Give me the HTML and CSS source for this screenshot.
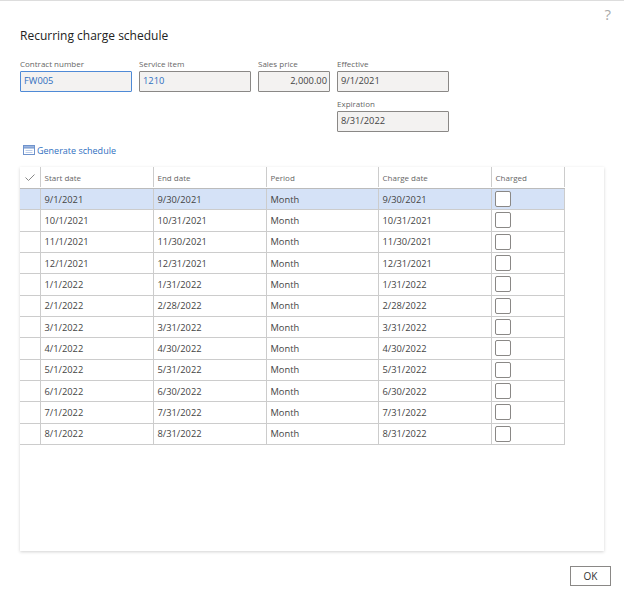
FILE: index.html
```html
<!DOCTYPE html>
<html lang="en">
<head>
    <meta charset="UTF-8">
    <title>Recurring charge schedule</title>
    <link rel="stylesheet" href="styles.css">
</head>
<body>
    <div class="dialog">
        <div class="help">?</div>
        <h1 class="title">Recurring charge schedule</h1>

        <!-- Header fields -->
        <div class="fields">
            <div class="field w-wide">
                <label>Contract number</label>
                <div class="input focused link">FW005</div>
            </div>
            <div class="field w-wide">
                <label>Service item</label>
                <div class="input link">1210</div>
            </div>
            <div class="field w-price">
                <label>Sales price</label>
                <div class="input right">2,000.00</div>
            </div>
            <div class="field-stack">
                <div class="field w-wide">
                    <label>Effective</label>
                    <div class="input">9/1/2021</div>
                </div>
                <div class="field w-wide">
                    <label>Expiration</label>
                    <div class="input">8/31/2022</div>
                </div>
            </div>
        </div>

        <div class="toolbar">
            <svg class="calendar" width="12" height="10" viewBox="0 0 12 10">
                <rect x="0.5" y="0.5" width="11" height="9" fill="none" stroke="#6f93cc"/>
                <rect x="0.5" y="0.5" width="11" height="2.5" fill="#9db6df" stroke="#6f93cc"/>
                <path d="M2.5 5.5h7M2.5 7.5h7" stroke="#bccde9"/>
            </svg>
            <span>Generate schedule</span>
        </div>

        <!-- Schedule grid -->
        <div class="panel">
            <div class="grid-row grid-head">
                <div class="cell check-cell">
                    <svg width="10" height="7" viewBox="0 0 10 7"><path d="M0.5 3.5l3 3 6-6" fill="none" stroke="#888"/></svg>
                </div>
                <div class="cell">Start date</div>
                <div class="cell">End date</div>
                <div class="cell">Period</div>
                <div class="cell">Charge date</div>
                <div class="cell">Charged</div>
            </div>
            <div class="grid-row selected">
                <div class="cell check-cell"></div>
                <div class="cell">9/1/2021</div><div class="cell">9/30/2021</div><div class="cell">Month</div><div class="cell">9/30/2021</div>
                <div class="cell"><span class="box"></span></div>
            </div>
            <div class="grid-row">
                <div class="cell check-cell"></div>
                <div class="cell">10/1/2021</div><div class="cell">10/31/2021</div><div class="cell">Month</div><div class="cell">10/31/2021</div>
                <div class="cell"><span class="box"></span></div>
            </div>
            <div class="grid-row">
                <div class="cell check-cell"></div>
                <div class="cell">11/1/2021</div><div class="cell">11/30/2021</div><div class="cell">Month</div><div class="cell">11/30/2021</div>
                <div class="cell"><span class="box"></span></div>
            </div>
            <div class="grid-row">
                <div class="cell check-cell"></div>
                <div class="cell">12/1/2021</div><div class="cell">12/31/2021</div><div class="cell">Month</div><div class="cell">12/31/2021</div>
                <div class="cell"><span class="box"></span></div>
            </div>
            <div class="grid-row">
                <div class="cell check-cell"></div>
                <div class="cell">1/1/2022</div><div class="cell">1/31/2022</div><div class="cell">Month</div><div class="cell">1/31/2022</div>
                <div class="cell"><span class="box"></span></div>
            </div>
            <div class="grid-row">
                <div class="cell check-cell"></div>
                <div class="cell">2/1/2022</div><div class="cell">2/28/2022</div><div class="cell">Month</div><div class="cell">2/28/2022</div>
                <div class="cell"><span class="box"></span></div>
            </div>
            <div class="grid-row">
                <div class="cell check-cell"></div>
                <div class="cell">3/1/2022</div><div class="cell">3/31/2022</div><div class="cell">Month</div><div class="cell">3/31/2022</div>
                <div class="cell"><span class="box"></span></div>
            </div>
            <div class="grid-row">
                <div class="cell check-cell"></div>
                <div class="cell">4/1/2022</div><div class="cell">4/30/2022</div><div class="cell">Month</div><div class="cell">4/30/2022</div>
                <div class="cell"><span class="box"></span></div>
            </div>
            <div class="grid-row">
                <div class="cell check-cell"></div>
                <div class="cell">5/1/2022</div><div class="cell">5/31/2022</div><div class="cell">Month</div><div class="cell">5/31/2022</div>
                <div class="cell"><span class="box"></span></div>
            </div>
            <div class="grid-row">
                <div class="cell check-cell"></div>
                <div class="cell">6/1/2022</div><div class="cell">6/30/2022</div><div class="cell">Month</div><div class="cell">6/30/2022</div>
                <div class="cell"><span class="box"></span></div>
            </div>
            <div class="grid-row">
                <div class="cell check-cell"></div>
                <div class="cell">7/1/2022</div><div class="cell">7/31/2022</div><div class="cell">Month</div><div class="cell">7/31/2022</div>
                <div class="cell"><span class="box"></span></div>
            </div>
            <div class="grid-row">
                <div class="cell check-cell"></div>
                <div class="cell">8/1/2022</div><div class="cell">8/31/2022</div><div class="cell">Month</div><div class="cell">8/31/2022</div>
                <div class="cell"><span class="box"></span></div>
            </div>
        </div>

        <div class="footer">
            <div class="ok-button">OK</div>
        </div>
    </div>
</body>
</html>
```

FILE: styles.css
```css
* {
  box-sizing: border-box;
  margin: 0;
  padding: 0;
}

html, body {
  height: 100%;
  overflow: hidden;
}

body {
  background-color: white;
  font-family: "Open Sans", "Noto Sans", sans-serif;
  color: #333;
}

.dialog {
  position: relative;
  height: 601px;
  padding: 28px 13px 0 20px;
  border-top: 1px solid #ddd;
}

.help {
  position: absolute;
  top: 3px;
  right: 13px;
  font-size: 15px;
  color: #aaa;
}

.title {
  font-size: 12px;
  font-weight: 400;
  line-height: 14px;
  color: #222;
}

.fields {
  display: flex;
  gap: 7px;
  margin-top: 14px;
  height: 85px;
}

.field-stack {
  display: flex;
  flex-direction: column;
  gap: 5.5px;
}

.field label {
  display: block;
  height: 14px;
  font-size: 8px;
  line-height: 13px;
  color: #666;
}

.w-wide {
  width: 112px;
}

.w-price {
  width: 72px;
}

.input {
  height: 20.5px;
  padding: 0 3px;
  background-color: #f3f2f1;
  border: 1px solid #8a8886;
  border-radius: 1px;
  font-size: 9.3px;
  line-height: 18.5px;
  color: #444;
}

.input.focused {
  border-color: #4f8ad6;
}

.input.link {
  color: #2f6fc0;
}

.input.right {
  padding-right: 2px;
  text-align: right;
}

.toolbar {
  display: flex;
  align-items: center;
  gap: 2px;
  height: 15px;
  padding-top: 1px;
  margin-left: 3px;
  font-size: 9px;
  color: #2f6fc0;
}

.panel {
  width: 584px;
  height: 384px;
  margin-top: 10px;
  box-shadow: 0 1px 3px rgba(0, 0, 0, 0.18);
}

.grid-row {
  display: grid;
  grid-template-columns: 21px 113px 113px 112px 113px 73px;
  width: 545px;
  height: 21.33px;
  border-bottom: 1px solid #ccc;
  font-size: 9.3px;
  color: #444;
}

.grid-head {
  height: 22px;
  padding-bottom: 1px;
  font-size: 8px;
  color: #666;
  border-bottom-color: #bbb;
}

.cell {
  display: flex;
  align-items: center;
  padding-left: 3.5px;
  border-right: 1px solid #ccc;
}

.check-cell {
  justify-content: center;
  padding-left: 0;
}

.selected {
  background-color: #d5e2f7;
}

.box {
  width: 16px;
  height: 16px;
  margin-left: -1px;
  background-color: white;
  border: 1px solid #8a8886;
  border-radius: 2px;
}

.footer {
  display: flex;
  justify-content: flex-end;
  margin-top: 15px;
}

.ok-button {
  width: 41px;
  height: 20px;
  background-color: white;
  border: 1px solid #8a8886;
  font-size: 10px;
  line-height: 18px;
  text-align: center;
  color: #333;
}
```
